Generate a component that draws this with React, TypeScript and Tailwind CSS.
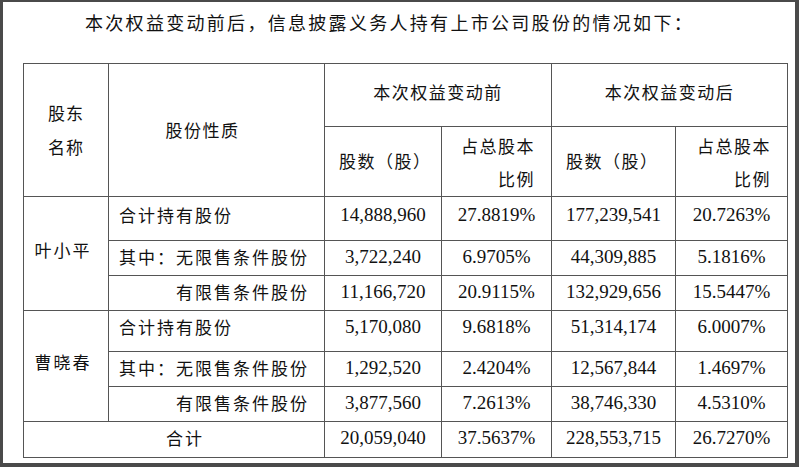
const rows = [
  {
    name: "叶小平",
    items: [
      { label: "合计持有股份", sub: false, h: "h-[44px]", v: ["14,888,960", "27.8819%", "177,239,541", "20.7263%"] },
      { label: "其中：无限售条件股份", sub: false, h: "h-[35px]", v: ["3,722,240", "6.9705%", "44,309,885", "5.1816%"] },
      { label: "有限售条件股份", sub: true, h: "h-[35px]", v: ["11,166,720", "20.9115%", "132,929,656", "15.5447%"] },
    ],
  },
  {
    name: "曹晓春",
    items: [
      { label: "合计持有股份", sub: false, h: "h-[41px]", v: ["5,170,080", "9.6818%", "51,314,174", "6.0007%"] },
      { label: "其中：无限售条件股份", sub: false, h: "h-[35px]", v: ["1,292,520", "2.4204%", "12,567,844", "1.4697%"] },
      { label: "有限售条件股份", sub: true, h: "h-[35px]", v: ["3,877,560", "7.2613%", "38,746,330", "4.5310%"] },
    ],
  },
];

const cell = "border border-[#555] p-0";

export default function App() {
  return (
    <div
      className="w-[799px] h-[467px] bg-white border-[#4a4a4a] border-l-[3px] border-t-[2px] border-r-[4px] border-b-[4px] text-[#111] overflow-hidden"
      style={{ fontFamily: '"Liberation Serif", "Noto Sans CJK SC", serif' }}
    >
      <div className="h-[42px] pl-[82px] pt-[6px] text-[18px] leading-[28px] tracking-[2.3px] font-['Noto_Sans_CJK_SC',sans-serif]">
        本次权益变动前后，信息披露义务人持有上市公司股份的情况如下：
      </div>
      <div className="pl-[20px] pt-[19px]">
        <table className="border-collapse table-fixed w-[764px]">
          <colgroup>
            <col className="w-[85px]" />
            <col className="w-[216px]" />
            <col className="w-[117px]" />
            <col className="w-[110px]" />
            <col className="w-[124px]" />
            <col className="w-[112px]" />
          </colgroup>
          <tbody className="text-[19px]">
            <tr className="h-[63px]">
              <td rowSpan={2} className={`${cell} text-center text-[17px] leading-[34px] tracking-[1px] font-['Noto_Sans_CJK_SC',sans-serif]`}>
                股东<br />名称
              </td>
              <td rowSpan={2} className={`${cell} text-center pr-[28px] text-[17px] tracking-[1.5px] font-['Noto_Sans_CJK_SC',sans-serif]`}>
                股份性质
              </td>
              <td colSpan={2} className={`${cell} text-center text-[17px] tracking-[1.5px] font-['Noto_Sans_CJK_SC',sans-serif] pb-[6px]`}>
                本次权益变动前
              </td>
              <td colSpan={2} className={`${cell} text-center text-[17px] tracking-[1.5px] font-['Noto_Sans_CJK_SC',sans-serif] pb-[6px]`}>
                本次权益变动后
              </td>
            </tr>
            <tr className="h-[70px]">
              <td className={`${cell} pl-[14px] text-[17px] tracking-[1.5px] font-['Noto_Sans_CJK_SC',sans-serif] pb-[2px]`}>股数（股）</td>
              <td className={`${cell} text-right pr-[16px] text-[17px] leading-[33px] tracking-[1.5px] font-['Noto_Sans_CJK_SC',sans-serif]`}>
                占总股本<br />比例
              </td>
              <td className={`${cell} pl-[14px] text-[17px] tracking-[1.5px] font-['Noto_Sans_CJK_SC',sans-serif] pb-[2px]`}>股数（股）</td>
              <td className={`${cell} text-right pr-[16px] text-[17px] leading-[33px] tracking-[1.5px] font-['Noto_Sans_CJK_SC',sans-serif]`}>
                占总股本<br />比例
              </td>
            </tr>
            {rows.map((g) =>
              g.items.map((it, i) => (
                <tr key={g.name + i} className={it.h}>
                  {i === 0 && (
                    <td rowSpan={3} className={`${cell} text-center pr-[6px] pb-[8px] text-[17px] tracking-[2px] font-['Noto_Sans_CJK_SC',sans-serif]`}>
                      {g.name}
                    </td>
                  )}
                  <td
                    className={`${cell} text-[17px] tracking-[2px] font-['Noto_Sans_CJK_SC',sans-serif] ${
                      it.sub ? "text-right pr-[15px]" : "pl-[10px]"
                    } ${i === 0 ? "pb-[8px]" : "pb-[2px]"}`}
                  >
                    {it.label}
                  </td>
                  {it.v.map((x, j) => (
                    <td key={j} className={`${cell} text-center leading-[22px] ${i === 0 ? "pb-[8px]" : "pb-[2px]"}`}>
                      {x}
                    </td>
                  ))}
                </tr>
              ))
            )}
            <tr className="h-[36px]">
              <td colSpan={2} className={`${cell} text-center pl-[22px] pb-[4px] text-[17px] tracking-[2px] font-['Noto_Sans_CJK_SC',sans-serif]`}>
                合计
              </td>
              {["20,059,040", "37.5637%", "228,553,715", "26.7270%"].map((x, j) => (
                <td key={j} className={`${cell} text-center leading-[22px] pb-[4px]`}>
                  {x}
                </td>
              ))}
            </tr>
          </tbody>
        </table>
      </div>
    </div>
  );
}
